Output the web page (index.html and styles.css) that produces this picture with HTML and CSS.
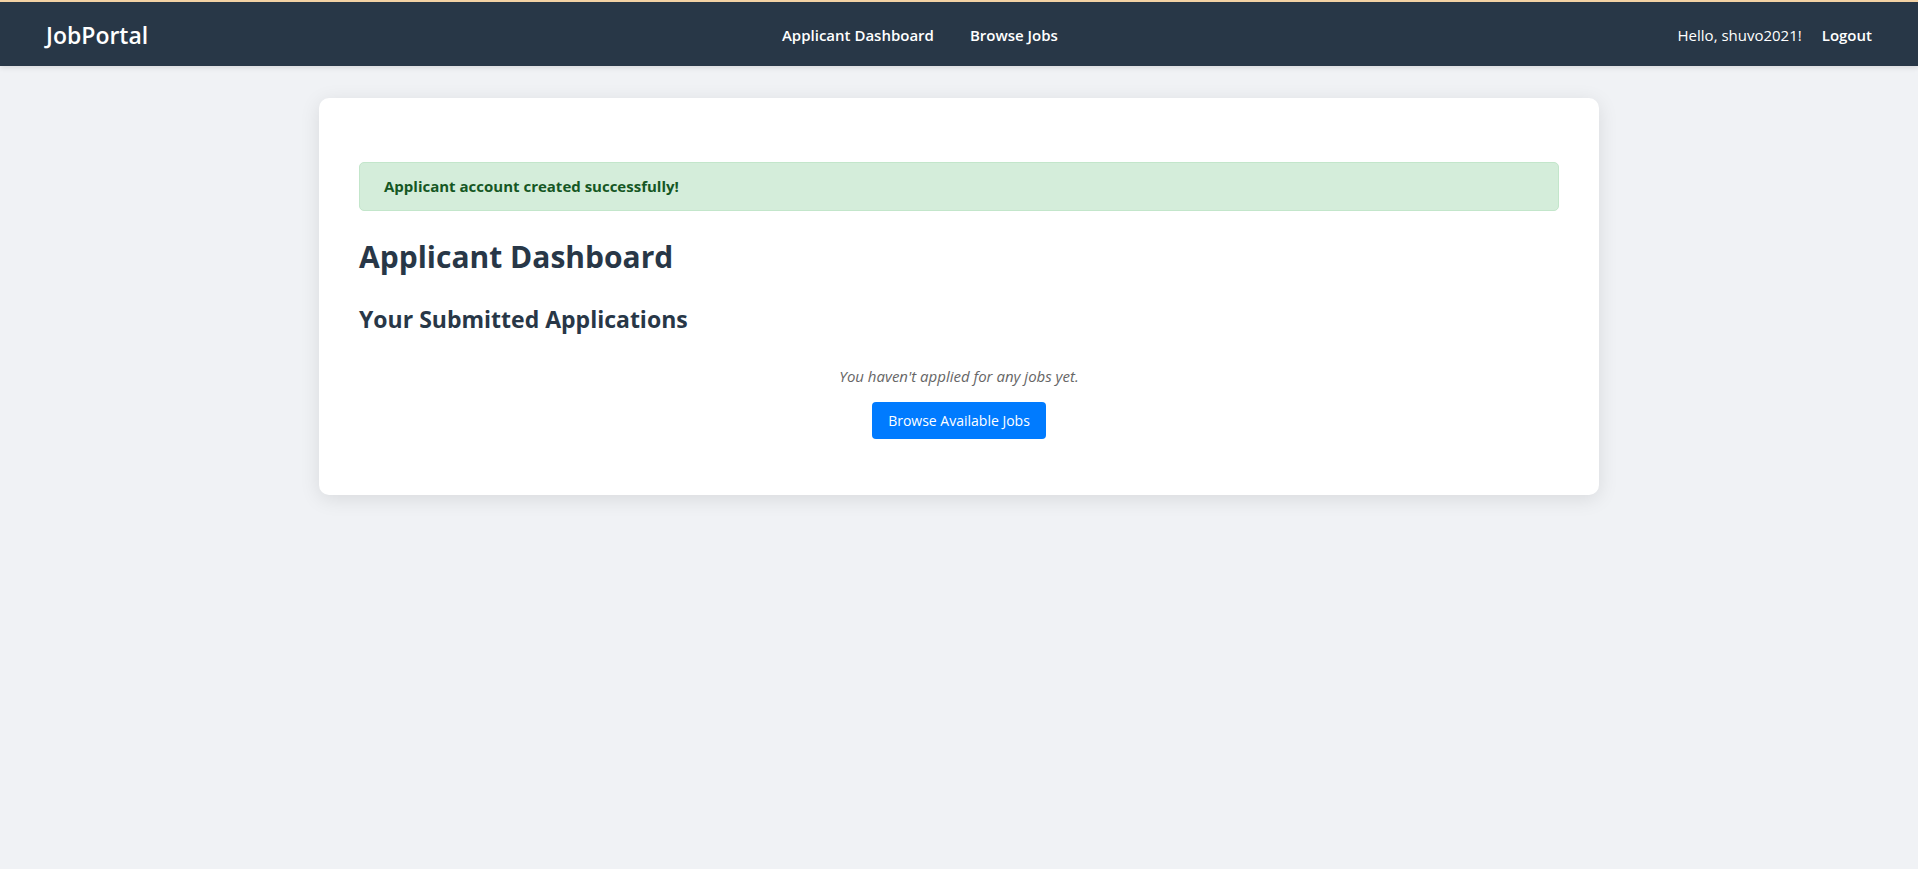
FILE: index.html
```html
<!DOCTYPE html>
<html lang="en">
<head>
<meta charset="utf-8">
<meta name="viewport" content="width=device-width, initial-scale=1">
<title>Applicant Dashboard - JobPortal</title>
<link rel="stylesheet" href="styles.css">
</head>
<body>
<header class="navbar">
  <a class="brand" href="#">JobPortal</a>
  <nav class="nav-links">
    <a class="nav-link" href="#">Applicant Dashboard</a>
    <a class="nav-link" href="#">Browse Jobs</a>
  </nav>
  <div class="nav-user">
    <span class="greeting">Hello, shuvo2021!</span>
    <a class="nav-link" href="#">Logout</a>
  </div>
</header>
<main class="card">
  <p class="alert" role="status">Applicant account created successfully!</p>
  <h1 class="page-title">Applicant Dashboard</h1>
  <h2 class="section-title">Your Submitted Applications</h2>
  <div class="empty">
    <p class="empty-text">You haven't applied for any jobs yet.</p>
    <a class="button" href="#">Browse Available Jobs</a>
  </div>
</main>
</body>
</html>
```
FILE: styles.css
```css
* {
  box-sizing: border-box;
}

body {
  margin: 0;
  border-top: 2px solid #f3d2a4;
  background: #f0f2f5;
  color: #333;
  font: 15px/23px "Segoe UI", "Open Sans", "Noto Sans", sans-serif;
}

a {
  color: inherit;
  text-decoration: none;
}

.navbar {
  display: flex;
  align-items: center;
  justify-content: space-between;
  min-height: 64px;
  padding: 2px 46px 0;
  background: #283747;
  color: #fff;
  box-shadow: 0 2px 5px rgba(0, 0, 0, 0.1);
}

.brand {
  font-size: 23px;
  font-weight: 600;
  line-height: 32px;
}

.nav-links {
  display: flex;
  gap: 36px;
  padding-left: 14px;
}

.nav-link {
  font-weight: 600;
}

.nav-user {
  display: flex;
  gap: 20px;
}

.card {
  max-width: 1280px;
  margin: 32px auto;
  padding: 64px 40px 56px;
  border-radius: 10px;
  background: #fff;
  box-shadow: 0 4px 20px rgba(0, 0, 0, 0.1);
}

.alert {
  margin: 0 0 24px;
  padding: 12px 24px;
  border: 1px solid #c3e6cb;
  border-radius: 5px;
  background: #d4edda;
  color: #155724;
  font-weight: 700;
}

.page-title {
  margin: 0 0 24px;
  color: #283747;
  font-size: 30px;
  line-height: 44px;
}

.section-title {
  margin: 0;
  color: #283747;
  font-size: 23px;
  line-height: 32px;
}

.empty {
  display: flex;
  flex-direction: column;
  align-items: center;
  gap: 14px;
  padding-top: 30px;
}

.empty-text {
  margin: 0;
  color: #666;
  font-style: italic;
}

.button {
  padding: 8px 16px;
  border-radius: 4px;
  background: #007bff;
  color: #fff;
  font-size: 14px;
  line-height: 21px;
}
```
